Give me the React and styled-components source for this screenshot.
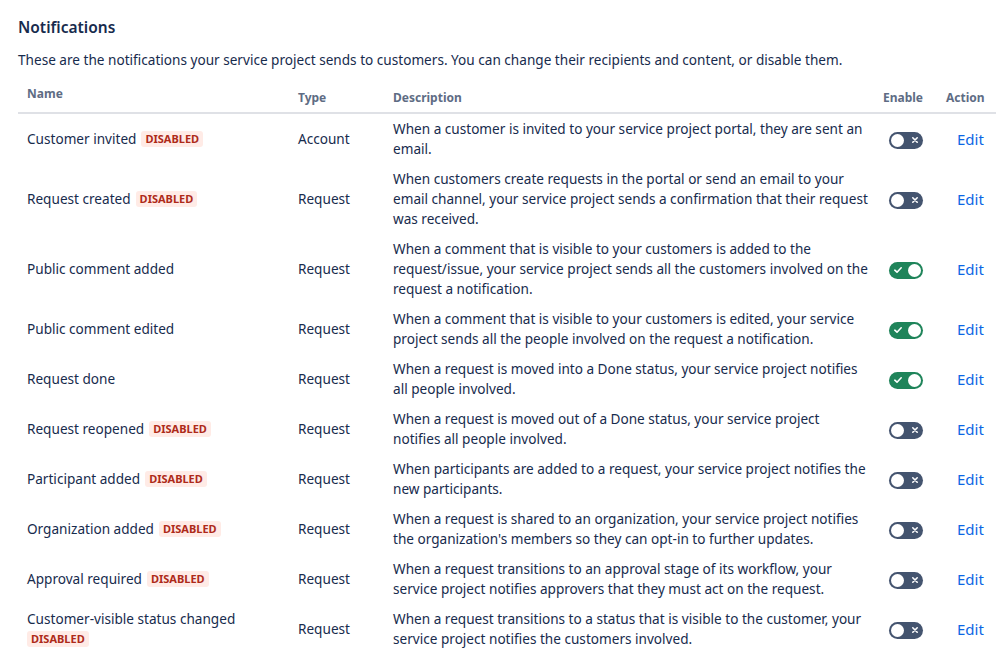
import React from "react";
import styled, { createGlobalStyle } from "styled-components";

const Global = createGlobalStyle`
  html, body { margin: 0; padding: 0; background: #fff; }
  body { font-family: "Noto Sans", "Open Sans", sans-serif; color: #172B4D; }
`;

const Page = styled.div`
  padding: 15px 3px 0 18px;
`;

const Title = styled.h2`
  margin: 0;
  font-size: 15.5px;
  font-weight: 600;
  line-height: 24px;
  color: #172B4D;
`;

const Intro = styled.p`
  margin: 11px 0 0;
  font-size: 13.6px;
  line-height: 20px;
  color: #172B4D;
`;

const Table = styled.table`
  width: 978px;
  margin-top: 16px;
  border-collapse: collapse;
  table-layout: fixed;
  border-bottom: 2px solid #DFE1E6;
`;

const HeadRow = styled.tr`
  border-bottom: 2px solid #DFE1E6;
`;

const Th = styled.th`
  text-align: left;
  font-size: 12px;
  font-weight: 700;
  color: #5E6C84;
  line-height: 16px;
  vertical-align: bottom;
  padding: 0 ${(p) => p.$pr || 0}px ${(p) => p.$pb || 6}px ${(p) => p.$pl || 0}px;
`;

const Td = styled.td`
  font-size: 13.6px;
  line-height: 20px;
  vertical-align: middle;
  padding: 5px ${(p) => p.$pr || 0}px 5px ${(p) => p.$pl || 0}px;
  color: #172B4D;
`;

const NameText = styled.span`
  margin-right: 5px;
`;

const Lozenge = styled.span`
  display: inline-block;
  background: #FFEBE6;
  color: #AE2A19;
  font-size: 11px;
  font-weight: 700;
  line-height: 16px;
  padding: 0 4px;
  border-radius: 3px;
  vertical-align: 1px;
  text-transform: uppercase;
`;

const Toggle = styled.span`
  display: inline-flex;
  align-items: center;
  justify-content: space-between;
  width: 34px;
  height: 17px;
  border-radius: 9px;
  padding: 0 2px;
  box-sizing: border-box;
  background: ${(p) => (p.$on ? "#1F845A" : "#44546F")};
  flex-direction: ${(p) => (p.$on ? "row" : "row-reverse")};
  vertical-align: middle;
`;

const Knob = styled.span`
  width: 13px;
  height: 13px;
  border-radius: 50%;
  background: #fff;
`;

const IconWrap = styled.span`
  display: inline-flex;
  width: 13px;
  justify-content: center;
`;

const EditLink = styled.a`
  color: #0C66E4;
  font-size: 15px;
  text-decoration: none;
  cursor: pointer;
`;

const rows = [
  { name: "Customer invited", off: true, type: "Account", desc: "When a customer is invited to your service project portal, they are sent an email." },
  { name: "Request created", off: true, type: "Request", desc: "When customers create requests in the portal or send an email to your email channel, your service project sends a confirmation that their request was received." },
  { name: "Public comment added", off: false, type: "Request", desc: "When a comment that is visible to your customers is added to the request/issue, your service project sends all the customers involved on the request a notification." },
  { name: "Public comment edited", off: false, type: "Request", desc: "When a comment that is visible to your customers is edited, your service project sends all the people involved on the request a notification." },
  { name: "Request done", off: false, type: "Request", desc: "When a request is moved into a Done status, your service project notifies all people involved." },
  { name: "Request reopened", off: true, type: "Request", desc: "When a request is moved out of a Done status, your service project notifies all people involved." },
  { name: "Participant added", off: true, type: "Request", desc: "When participants are added to a request, your service project notifies the new participants." },
  { name: "Organization added", off: true, type: "Request", desc: "When a request is shared to an organization, your service project notifies the organization's members so they can opt-in to further updates." },
  { name: "Approval required", off: true, type: "Request", desc: "When a request transitions to an approval stage of its workflow, your service project notifies approvers that they must act on the request." },
  { name: "Customer-visible status changed", off: true, type: "Request", desc: "When a request transitions to a status that is visible to the customer, your service project notifies the customers involved.", breakName: true },
];

const Check = () => (
  <svg width="10" height="10" viewBox="0 0 10 10">
    <path d="M1.8 5.2 L4 7.2 L8.2 2.8" stroke="#fff" strokeWidth="1.6" fill="none" strokeLinecap="round" strokeLinejoin="round" />
  </svg>
);

const Cross = () => (
  <svg width="8" height="8" viewBox="0 0 8 8">
    <path d="M1.8 1.8 L6.2 6.2 M6.2 1.8 L1.8 6.2" stroke="#fff" strokeWidth="1.6" strokeLinecap="round" />
  </svg>
);

const Switch = ({ on }) => (
  <Toggle $on={on}>
    <IconWrap>{on ? <Check /> : <Cross />}</IconWrap>
    <Knob />
  </Toggle>
);

export default function App() {
  return (
    <>
      <Global />
      <Page>
        <Title>Notifications</Title>
        <Intro>
          These are the notifications your service project sends to customers. You can change their recipients and content, or disable them.
        </Intro>
        <Table>
          <colgroup>
            <col style={{ width: 271 }} />
            <col style={{ width: 95 }} />
            <col style={{ width: 491 }} />
            <col style={{ width: 61 }} />
            <col style={{ width: 60 }} />
          </colgroup>
          <thead>
            <HeadRow>
              <Th $pl={9} $pb={10}>Name</Th>
              <Th $pl={9}>Type</Th>
              <Th $pl={9}>Description</Th>
              <Th $pl={8}>Enable</Th>
              <Th $pl={10}>Action</Th>
            </HeadRow>
          </thead>
          <tbody>
            {rows.map((r) => (
              <tr key={r.name}>
                <Td $pl={9}>
                  <NameText>{r.name}</NameText>
                  {r.breakName && <br />}
                  {r.off && <Lozenge>Disabled</Lozenge>}
                </Td>
                <Td $pl={9}>{r.type}</Td>
                <Td $pl={9} $pr={6}>{r.desc}</Td>
                <Td $pl={14}>
                  <Switch on={!r.off} />
                </Td>
                <Td $pl={21}>
                  <EditLink>Edit</EditLink>
                </Td>
              </tr>
            ))}
          </tbody>
        </Table>
      </Page>
    </>
  );
}
